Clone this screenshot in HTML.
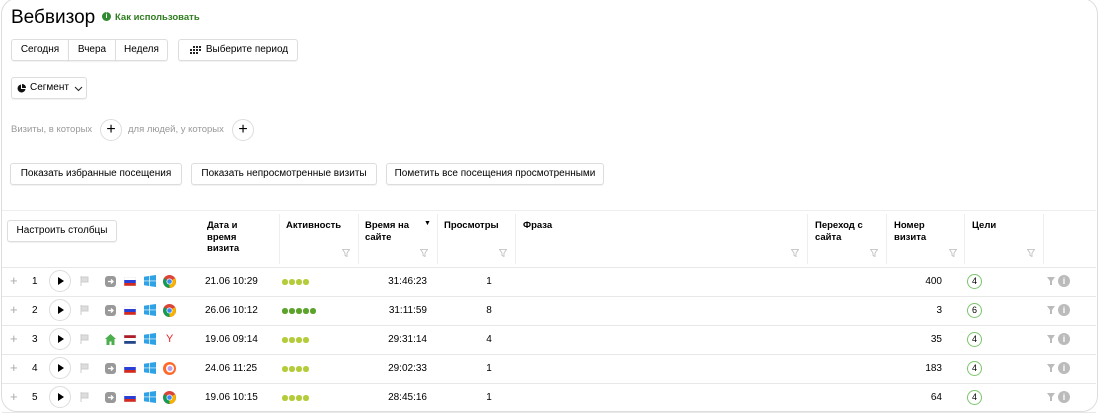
<!DOCTYPE html>
<html><head><meta charset="utf-8"><style>
*{box-sizing:border-box;margin:0;padding:0}
body{width:1100px;height:420px;background:#fff;font-family:"Liberation Sans",sans-serif;font-size:10px;color:#000;position:relative;overflow:hidden}
.a{position:absolute}
.card{left:1px;top:-2px;width:1097px;height:414px;border:1px solid #ddd;border-radius:16px}
.btn{position:absolute;border:1px solid #ddd;border-radius:3px;height:22px;line-height:20px;text-align:center;font-size:10px;background:#fff;box-shadow:0 1px 1px rgba(0,0,0,.06)}
.h{position:absolute;top:220px;font-weight:bold;font-size:9.5px;line-height:11.5px}
.sep{position:absolute;top:214px;width:1px;height:50px;background:#eee}
.fl{position:absolute;top:249px;width:8px;height:8px}
.rl{position:absolute;left:2px;width:1094px;height:1px;background:#e8e8e8}
.pc{position:absolute;width:22px;height:22px;border:1px solid #ddd;border-radius:50%}
.dot{display:inline-block;width:5.5px;height:5.5px;border-radius:50%;margin-right:1.5px}
.g{position:absolute;width:15px;height:15px;border:1px solid #7cc56c;border-radius:50%;font-size:9px;text-align:center;line-height:13px}
</style></head><body>
<div class="a card"></div>
<div class="a" style="left:11px;top:7px;font-size:19px">Вебвизор</div>
<div class="a" style="left:102px;top:12px;width:9px;height:9px;border-radius:50%;background:#2e8b2e;color:#fff;font-size:7px;text-align:center;line-height:9px;font-weight:bold">i</div>
<div class="a" style="left:115px;top:12px;font-size:9.5px;color:#2e7d1f;font-weight:bold">Как использовать</div>

<div class="btn" style="left:11px;top:39px;width:58px;border-radius:3px 0 0 3px">Сегодня</div>
<div class="btn" style="left:68px;top:39px;width:48px;border-radius:0">Вчера</div>
<div class="btn" style="left:115px;top:39px;width:53px;border-radius:0 3px 3px 0">Неделя</div>
<div class="btn" style="left:178px;top:39px;width:120px">
<svg width="11" height="9" style="position:absolute;left:11px;top:6px"><g fill="#222"><rect x="0" y="3" width="2" height="2"/><rect x="0" y="6" width="2" height="2"/><rect x="3" y="0" width="2" height="2"/><rect x="3" y="3" width="2" height="2"/><rect x="3" y="6" width="2" height="2"/><rect x="6" y="0" width="2" height="2"/><rect x="6" y="3" width="2" height="2"/><rect x="6" y="6" width="2" height="2"/><rect x="9" y="0" width="2" height="2"/><rect x="9" y="3" width="2" height="2"/></g></svg>
<span style="margin-left:18px">Выберите период</span></div>

<div class="btn" style="left:11px;top:77px;width:76px;text-align:left;padding-left:18px">Сегмент
<svg width="9" height="9" style="position:absolute;left:5px;top:6px"><path d="M4 0.5A4 4 0 1 0 8.5 5H4Z" fill="#111"/><path d="M5 0A4 4 0 0 1 9 4H5Z" fill="#111"/></svg>
<svg width="9" height="6" style="position:absolute;left:62px;top:8px"><path d="M1 1l3.5 3.5L8 1" fill="none" stroke="#222" stroke-width="1"/></svg></div>

<div class="a" style="left:11px;top:124px;color:#999;font-size:9.5px">Визиты, в которых</div>
<div class="pc" style="left:100px;top:119px;font-size:16px;text-align:center;line-height:19px">+</div>
<div class="a" style="left:128px;top:124px;color:#999;font-size:9.5px">для людей, у которых</div>
<div class="pc" style="left:232px;top:119px;font-size:16px;text-align:center;line-height:19px">+</div>

<div class="btn" style="left:10px;top:163px;width:172px">Показать избранные посещения</div>
<div class="btn" style="left:191px;top:163px;width:186px">Показать непросмотренные визиты</div>
<div class="btn" style="left:386px;top:163px;width:218px">Пометить все посещения просмотренными</div>

<div class="rl" style="top:210px;background:#eee"></div>
<div class="btn" style="left:7px;top:220px;width:110px">Настроить столбцы</div>

<div class="h" style="left:207px">Дата и<br>время<br>визита</div>
<div class="sep" style="left:279px"></div>
<div class="h" style="left:286px">Активность</div><svg class="fl" style="left:342px" viewBox="0 0 8 8"><path d="M0.5 0.5h7L5 4v3.5L3 6.5V4z" fill="none" stroke="#bbb" stroke-width=".8"/></svg>
<div class="sep" style="left:358px"></div>
<div class="h" style="left:365px">Время на<br>сайте</div><div class="a" style="left:424px;top:220px;font-size:7px">▼</div><svg class="fl" style="left:420px" viewBox="0 0 8 8"><path d="M0.5 0.5h7L5 4v3.5L3 6.5V4z" fill="none" stroke="#bbb" stroke-width=".8"/></svg>
<div class="sep" style="left:437px"></div>
<div class="h" style="left:444px">Просмотры</div><svg class="fl" style="left:499px" viewBox="0 0 8 8"><path d="M0.5 0.5h7L5 4v3.5L3 6.5V4z" fill="none" stroke="#bbb" stroke-width=".8"/></svg>
<div class="sep" style="left:515px"></div>
<div class="h" style="left:523px">Фраза</div><svg class="fl" style="left:791px" viewBox="0 0 8 8"><path d="M0.5 0.5h7L5 4v3.5L3 6.5V4z" fill="none" stroke="#bbb" stroke-width=".8"/></svg>
<div class="sep" style="left:807px"></div>
<div class="h" style="left:815px">Переход с<br>сайта</div><svg class="fl" style="left:870px" viewBox="0 0 8 8"><path d="M0.5 0.5h7L5 4v3.5L3 6.5V4z" fill="none" stroke="#bbb" stroke-width=".8"/></svg>
<div class="sep" style="left:886px"></div>
<div class="h" style="left:894px">Номер<br>визита</div><svg class="fl" style="left:949px" viewBox="0 0 8 8"><path d="M0.5 0.5h7L5 4v3.5L3 6.5V4z" fill="none" stroke="#bbb" stroke-width=".8"/></svg>
<div class="sep" style="left:964px"></div>
<div class="h" style="left:972px">Цели</div><svg class="fl" style="left:1027px" viewBox="0 0 8 8"><path d="M0.5 0.5h7L5 4v3.5L3 6.5V4z" fill="none" stroke="#bbb" stroke-width=".8"/></svg>
<div class="sep" style="left:1043px"></div>

<div id="rows"></div>
<script>
var d=[["1","21.06 10:29",4,"31:46:23","1","400","4","ru","chrome","login"],
["2","26.06 10:12",5,"31:11:59","8","3","6","ru","chrome","login"],
["3","19.06 09:14",4,"29:31:14","4","35","4","nl","ya","home"],
["4","24.06 11:25",4,"29:02:33","1","183","4","ru","ff","login"],
["5","19.06 10:15",4,"28:45:16","1","64","4","ru","chrome","login"]];
var h="";
d.forEach(function(r,i){var y=267+i*29,c=y+14;
h+='<div class="rl" style="top:'+y+'px"></div>';
h+='<div class="a" style="left:10px;top:'+(c-8)+'px;font-size:13px;color:#aaa">+</div>';
h+='<div class="a" style="left:32px;top:'+(c-5)+'px">'+r[0]+'</div>';
h+='<div class="pc" style="left:49px;top:'+(c-11)+'px"><svg width="20" height="20"><path d="M8 6l6 4-6 4z" fill="#000"/></svg></div>';
h+='<svg class="a" style="left:80px;top:'+(c-5)+'px" width="9" height="10"><path d="M1 0v10M1 1h7v5H1" fill="#ddd" stroke="#ccc" stroke-width="1"/></svg>';
if(r[9]=="login")h+='<svg class="a" style="left:105px;top:'+(c-5)+'px" width="11" height="11"><rect x="0" y="0" width="11" height="11" rx="3" fill="#999"/><path d="M3 5.5h5M6 3.5l2 2-2 2" stroke="#fff" stroke-width="1.3" fill="none"/></svg>';
else h+='<svg class="a" style="left:105px;top:'+(c-5)+'px" width="11" height="11"><path d="M5.5 0L11 5H9.5v6h-3V7.5h-2V11h-3V5H0z" fill="#4cae4c"/></svg>';
var f=r[7]=="ru"?['#fff','#2a3fd6','#d52b1e']:['#ae1c28','#fff','#21468b'];
h+='<svg class="a" style="left:124px;top:'+(c-4)+'px" width="12" height="9"><rect y="0" width="12" height="3" fill="'+f[0]+'"/><rect y="3" width="12" height="3" fill="'+f[1]+'"/><rect y="6" width="12" height="3" fill="'+f[2]+'"/><rect width="12" height="9" fill="none" stroke="#ddd" stroke-width=".5"/></svg>';
h+='<svg class="a" style="left:144px;top:'+(c-6)+'px" width="12" height="12"><path d="M0 1.8L5 1v4.6H0zM5.7 0.9L12 0v5.6H5.7zM0 6.3h5v4.7L0 10.2zM5.7 6.3H12V12l-6.3-.9z" fill="#2fa2e6"/></svg>';
if(r[8]=="chrome")h+='<svg class="a" style="left:163px;top:'+(c-6)+'px" width="13" height="13"><circle cx="6.5" cy="6.5" r="6.5" fill="#db4437"/><path d="M6.5 6.5L1 3.3A6.5 6.5 0 0 0 6.5 13z" fill="#0f9d58"/><path d="M6.5 6.5L12 3.3A6.5 6.5 0 0 1 6.5 13z" fill="#f4b400"/><circle cx="6.5" cy="6.5" r="3" fill="#fff"/><circle cx="6.5" cy="6.5" r="2.3" fill="#4285f4"/></svg>';
else if(r[8]=="ya")h+='<div class="a" style="left:166px;top:'+(c-6)+'px;color:#e22;font-size:11px">Y</div>';
else h+='<svg class="a" style="left:163px;top:'+(c-6)+'px" width="13" height="13"><circle cx="6.5" cy="6.5" r="6.5" fill="#ff6a2b"/><circle cx="7" cy="6.5" r="4" fill="#fff"/><circle cx="7" cy="6.5" r="2.5" fill="#7b3fd6" opacity=".5"/></svg>';
h+='<div class="a" style="left:205px;top:'+(c-5)+'px">'+r[1]+'</div>';
var dots="";for(var k=0;k<r[2];k++)dots+='<span class="dot" style="background:'+(r[2]==5?'#5ba32a':'#b5cc3a')+'"></span>';
h+='<div class="a" style="left:282px;top:'+(c-2)+'px;line-height:5px">'+dots+'</div>';
h+='<div class="a" style="left:360px;width:67px;text-align:right;top:'+(c-5)+'px">'+r[3]+'</div>';
h+='<div class="a" style="left:470px;width:38px;text-align:center;top:'+(c-5)+'px">'+r[4]+'</div>';
h+='<div class="a" style="left:880px;width:62px;text-align:right;top:'+(c-5)+'px">'+r[5]+'</div>';
h+='<div class="g" style="left:967px;top:'+(c-7)+'px">'+r[6]+'</div>';
h+='<svg class="a" style="left:1047px;top:'+(c-4)+'px" width="8" height="8"><path d="M0 0h8L5 4v4H3V4z" fill="#bbb"/></svg>';
h+='<div class="a" style="left:1058px;top:'+(c-6)+'px;width:12px;height:12px;border-radius:50%;background:#bbb;color:#fff;font-size:9px;font-weight:bold;text-align:center;line-height:12px">i</div>';
});
h+='<div class="rl" style="top:412px"></div>';
document.getElementById('rows').innerHTML=h;
</script>
</body></html>
